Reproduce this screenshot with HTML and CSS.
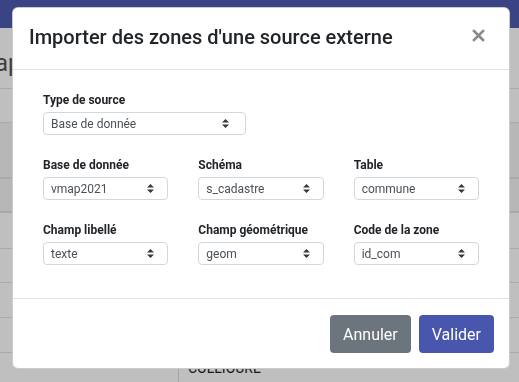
FILE: index.html
```html
<!DOCTYPE html>
<html lang="fr">
<head>
    <meta charset="UTF-8">
    <meta name="viewport" content="width=device-width, initial-scale=1.0">
    <title>Importer des zones</title>
    <link rel="stylesheet" href="styles.css">
</head>
<body>
    <div class="navbar"></div>
    <div class="page">
        <div class="page-title">ap</div>
        <div class="table">
            <div class="row"></div>
            <div class="row row-tall shaded thick"></div>
            <div class="row shaded thick"></div>
            <div class="row row-36"></div>
            <div class="row"></div>
            <div class="row row-35"></div>
            <div class="row row-35"></div>
            <div class="row">
                <div class="cell cell-first"></div>
                <div class="cell">COLLIOURE</div>
            </div>
        </div>
    </div>

    <div class="backdrop"></div>

    <div class="modal">
        <div class="modal-header">
            <h5 class="modal-title">Importer des zones d'une source externe</h5>
            <button class="close" type="button">
                <svg width="13" height="13" viewBox="0 0 13 13">
                    <path d="M2 2 L11 11 M11 2 L2 11" stroke="#888" stroke-width="2.6" stroke-linecap="square"/>
                </svg>
            </button>
        </div>
        <div class="modal-body">
            <div class="form-row">
                <div class="col col-6">
                    <label>Type de source</label>
                    <div class="select select-wide">
                        <span>Base de donnée</span>
                        <svg class="arrows" width="7" height="9" viewBox="0 0 7 9"><path d="M0 3.5 L3.5 0 L7 3.5 Z M0 5.5 L3.5 9 L7 5.5 Z" fill="#343a40"/></svg>
                    </div>
                </div>
            </div>
            <div class="form-row">
                <div class="col col-4">
                    <label>Base de donnée</label>
                    <div class="select">
                        <span>vmap2021</span>
                        <svg class="arrows" width="7" height="9" viewBox="0 0 7 9"><path d="M0 3.5 L3.5 0 L7 3.5 Z M0 5.5 L3.5 9 L7 5.5 Z" fill="#343a40"/></svg>
                    </div>
                </div>
                <div class="col col-4">
                    <label>Schéma</label>
                    <div class="select">
                        <span>s_cadastre</span>
                        <svg class="arrows" width="7" height="9" viewBox="0 0 7 9"><path d="M0 3.5 L3.5 0 L7 3.5 Z M0 5.5 L3.5 9 L7 5.5 Z" fill="#343a40"/></svg>
                    </div>
                </div>
                <div class="col col-4">
                    <label>Table</label>
                    <div class="select">
                        <span>commune</span>
                        <svg class="arrows" width="7" height="9" viewBox="0 0 7 9"><path d="M0 3.5 L3.5 0 L7 3.5 Z M0 5.5 L3.5 9 L7 5.5 Z" fill="#343a40"/></svg>
                    </div>
                </div>
            </div>
            <div class="form-row">
                <div class="col col-4">
                    <label>Champ libellé</label>
                    <div class="select">
                        <span>texte</span>
                        <svg class="arrows" width="7" height="9" viewBox="0 0 7 9"><path d="M0 3.5 L3.5 0 L7 3.5 Z M0 5.5 L3.5 9 L7 5.5 Z" fill="#343a40"/></svg>
                    </div>
                </div>
                <div class="col col-4">
                    <label>Champ géométrique</label>
                    <div class="select">
                        <span>geom</span>
                        <svg class="arrows" width="7" height="9" viewBox="0 0 7 9"><path d="M0 3.5 L3.5 0 L7 3.5 Z M0 5.5 L3.5 9 L7 5.5 Z" fill="#343a40"/></svg>
                    </div>
                </div>
                <div class="col col-4">
                    <label>Code de la zone</label>
                    <div class="select">
                        <span>id_com</span>
                        <svg class="arrows" width="7" height="9" viewBox="0 0 7 9"><path d="M0 3.5 L3.5 0 L7 3.5 Z M0 5.5 L3.5 9 L7 5.5 Z" fill="#343a40"/></svg>
                    </div>
                </div>
            </div>
        </div>
        <div class="modal-footer">
            <button class="btn btn-secondary" type="button">Annuler</button>
            <button class="btn btn-primary" type="button">Valider</button>
        </div>
    </div>
</body>
</html>
```

FILE: styles.css
```css
* {
    margin: 0;
    padding: 0;
    box-sizing: border-box;
    font-family: Roboto, 'Liberation Sans', sans-serif;
}

body {
    background: #fff;
    color: #212529;
    overflow: hidden;
}

/* page behind the modal */
.navbar {
    height: 28px;
    background: #4e5ab0;
}

.page-title {
    height: 60px;
    padding-top: 20px;
    margin-left: -5px;
    font-size: 24px;
    line-height: 30px;
    color: #555;
    white-space: nowrap;
}

.row {
    display: flex;
    height: 34px;
    border-top: 1px solid #e2e2e2;
}

.row-tall {
    height: 56px;
}

.row-35 {
    height: 35px;
}

.row-36 {
    height: 36px;
}

.shaded {
    background: #f4f4f4;
}

.thick {
    border-bottom: 1px solid #dde1ea;
}

.cell {
    padding: 5px 9px;
    font-size: 14px;
    line-height: 20px;
    color: #212529;
}

.cell-first {
    width: 179px;
    height: 40px;
    border-right: 1px solid #ddd;
}

.backdrop {
    position: fixed;
    inset: 0;
    background: rgba(0, 0, 0, 0.25);
}

/* modal */
.modal {
    position: fixed;
    left: 12px;
    top: 7px;
    width: 498px;
    background: #fff;
    border: 1px solid rgba(0, 0, 0, 0.2);
    border-radius: 6px;
}

.modal-header {
    display: flex;
    align-items: flex-start;
    justify-content: space-between;
    padding: 14px 24px 17px 16px;
    border-bottom: 1px solid #dee2e6;
}

.modal-title {
    font-size: 20px;
    font-weight: 500;
    line-height: 30px;
}

.close {
    margin-top: 7px;
    background: none;
    border: none;
    line-height: 0;
}

.modal-body {
    padding: 21px 15px 12px;
}

.form-row {
    display: flex;
    margin-bottom: 21px;
}

.col {
    padding: 0 15px;
}

.col-4 {
    width: 33.3333%;
}

.col-6 {
    width: 50%;
}

label {
    display: block;
    font-size: 12px;
    font-weight: 700;
    line-height: 18px;
    margin-bottom: 3px;
}

.select {
    display: flex;
    align-items: center;
    justify-content: space-between;
    height: 23px;
    padding: 0 13px 0 7px;
    border: 1px solid #d4d7da;
    border-radius: 4px;
    font-size: 12px;
    color: #495057;
}

.select-wide {
    padding-right: 16px;
}

.modal-footer {
    display: flex;
    justify-content: flex-end;
    gap: 8px;
    padding: 16px 15px 15px;
    border-top: 1px solid #dee2e6;
}

.btn {
    height: 38px;
    padding: 0 12px;
    border: 1px solid transparent;
    border-radius: 4px;
    font-size: 16px;
    color: #fff;
}

.btn-secondary {
    background: #6c757d;
}

.btn-primary {
    background: #4857ad;
}
```
